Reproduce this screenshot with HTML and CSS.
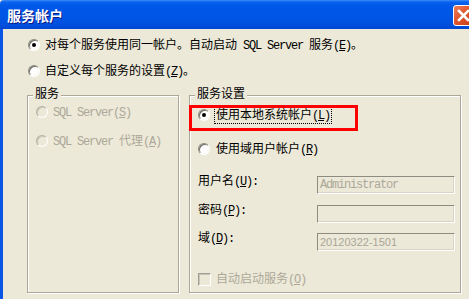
FILE: index.html
```html
<!DOCTYPE html>
<html lang="zh-CN">
<head>
<meta charset="utf-8">
<title>服务帐户</title>
<link rel="stylesheet" href="styles.css">
</head>
<body>
<div class="window">
  <div class="titlebar">
    <span class="title">服务帐户</span>
    <span class="close"><svg width="19" height="19" viewBox="0 0 19 19"><path d="M5 5 L14 14 M14 5 L5 14" stroke="#fff" stroke-width="2.6" stroke-linecap="square"/></svg></span>
  </div>
  <div class="body">
    <div class="opt top"><span class="radio checked"></span><span class="lbl">对每个服务使用同一帐户。自动启动<span class="m"> SQL Server </span>服务<span class="m">(<u>E</u>)</span>。</span></div>
    <div class="opt top second"><span class="radio"></span><span class="lbl">自定义每个服务的设置<span class="m">(<u>Z</u>)</span>。</span></div>
    <div class="groups">
      <div class="group left">
        <span class="legend">服务</span>
        <div class="opt disabled"><span class="radio"></span><span class="lbl"><span class="m">SQL Server(<u>S</u>)</span></span></div>
        <div class="opt disabled gap11"><span class="radio"></span><span class="lbl"><span class="m">SQL Server </span>代理<span class="m">(<u>A</u>)</span></span></div>
      </div>
      <div class="group right">
        <span class="legend">服务设置</span>
        <span class="highlight"></span>
        <div class="opt"><span class="radio checked"></span><span class="lbl focus">使用本地系统帐户<span class="m">(<u>L</u>)</span></span></div>
        <div class="opt gap16"><span class="radio"></span><span class="lbl plain">使用域用户帐户<span class="m">(<u>R</u>)</span></span></div>
        <div class="field gap18"><span class="flabel">用户名<span class="m">(<u>U</u>):</span></span><span class="input mono">Administrator</span></div>
        <div class="field gap11"><span class="flabel">密码<span class="m">(<u>P</u>):</span></span><span class="input"></span></div>
        <div class="field gap10"><span class="flabel">域<span class="m">(<u>D</u>):</span></span><span class="input sans">20120322-1501</span></div>
        <div class="opt disabled gap19"><span class="check"></span><span class="lbl">自动启动服务<span class="m">(<u>O</u>)</span></span></div>
      </div>
    </div>
  </div>
</div>
</body>
</html>
```
FILE: styles.css
```css
html, body {
  margin: 0;
  width: 469px;
  height: 299px;
  overflow: hidden;
  background: #ECE9D8;
  font-family: "Noto Sans CJK SC", sans-serif;
  font-size: 12px;
  color: #000;
}

.window {
  display: flex;
  flex-direction: column;
  height: 299px;
}

.titlebar {
  position: relative;
  flex: none;
  height: 29px;
  display: flex;
  align-items: center;
  padding-left: 7px;
  background: linear-gradient(#3D8CF7 0, #0A62EE 2px, #0058E8 6px, #0055E5 18px, #004FDD 25px, #0046D2 29px);
  border-top-left-radius: 4px;
}

.title {
  color: #fff;
  font-weight: bold;
  font-size: 14px;
  line-height: 16px;
  margin-top: 1px;
  text-shadow: 1px 1px #0A1883;
}

.close {
  position: absolute;
  left: 453px;
  top: 5px;
  width: 21px;
  height: 21px;
  box-sizing: border-box;
  border: 1px solid #fff;
  border-radius: 3px;
  background: linear-gradient(135deg, #EE7F5E 0%, #E0552D 45%, #C83E16 100%);
  display: flex;
  align-items: center;
  justify-content: center;
}

.body {
  flex: 1;
  border-left: 3px solid #0A55E6;
  padding: 7px 0 0 24px;
  display: flex;
  flex-direction: column;
}

.opt {
  display: flex;
  align-items: center;
  height: 18px;
  gap: 5px;
  white-space: nowrap;
}

.opt.top { padding-left: 1px; }
.opt.second { margin-top: 8px; }

.lbl { line-height: 14px; }

.m {
  font-family: "Liberation Mono", monospace;
  font-size: 12px;
  letter-spacing: -1.2px;
}

.radio {
  flex: none;
  position: relative;
  width: 12px;
  height: 12px;
  box-sizing: border-box;
  border-radius: 50%;
  border: 1px solid;
  border-color: #8E8C80 #FFFFFF #FFFFFF #8E8C80;
  background: radial-gradient(circle at 40% 40%, #fff 0, #fff 50%, #E8E6DC 100%);
  box-shadow: inset 1px 1px #6E6C64;
}

.radio.checked::after {
  content: "";
  position: absolute;
  left: 3px;
  top: 3px;
  width: 4px;
  height: 4px;
  border-radius: 50%;
  background: #000;
}

.disabled { color: #ACA899; }
.disabled .radio {
  background: #ECE9D8;
  border-color: #B5B2A4 #FFFFFF #FFFFFF #B5B2A4;
  box-shadow: inset 1px 1px #C9C6B8;
}

.groups {
  display: flex;
  gap: 10px;
  margin-top: 15px;
}

.group {
  position: relative;
  box-sizing: border-box;
  height: 198px;
  border: 1px solid #ACA899;
  box-shadow: inset 1px 1px #fff, 1px 1px #fff;
  padding-left: 8px;
  display: flex;
  flex-direction: column;
}

.group.left {
  width: 152px;
  padding-top: 7px;
}

.group.right {
  width: 272px;
  padding-top: 10px;
}

.legend {
  position: absolute;
  top: -10px;
  left: 5px;
  padding: 0 2px;
  line-height: 14px;
  background: #ECE9D8;
}

.highlight {
  position: absolute;
  left: -1px;
  top: 9px;
  width: 169px;
  height: 26px;
  box-sizing: border-box;
  border: 3px solid #FF0000;
}

.right .opt { gap: 4px; }

.focus {
  border: 1px dotted #000;
  padding: 0 1px;
}

.plain {
  border: 1px solid transparent;
  padding: 0 1px;
}

.gap10 { margin-top: 10px; }
.gap11 { margin-top: 11px; }
.gap16 { margin-top: 16px; }
.gap18 { margin-top: 18px; }
.gap19 { margin-top: 19px; }

.field {
  display: flex;
  align-items: flex-start;
  height: 18px;
}

.flabel {
  width: 119px;
  flex: none;
  line-height: 12px;
  margin-top: -2px;
  white-space: nowrap;
}

.input {
  width: 138px;
  height: 18px;
  box-sizing: border-box;
  border: 1px solid;
  border-color: #8E8C80 #FFFFFF #FFFFFF #8E8C80;
  box-shadow: inset -1px -1px #D8D5C6;
  background: #ECE9D8;
  padding-left: 2px;
  line-height: 16px;
  color: #ACA899;
  white-space: nowrap;
}

.input.mono {
  font-family: "Liberation Mono", monospace;
  font-size: 12px;
  letter-spacing: -1.2px;
}

.input.sans {
  font-family: "Liberation Sans", Arial, sans-serif;
  font-size: 11px;
  color: #A8A598;
}

.check {
  flex: none;
  width: 13px;
  height: 13px;
  box-sizing: border-box;
  border: 1px solid;
  border-color: #A09D92 #FFFFFF #FFFFFF #A09D92;
  box-shadow: inset 1px 1px #C9C6B8;
  background: #ECE9D8;
  margin-right: 1px;
}
```
